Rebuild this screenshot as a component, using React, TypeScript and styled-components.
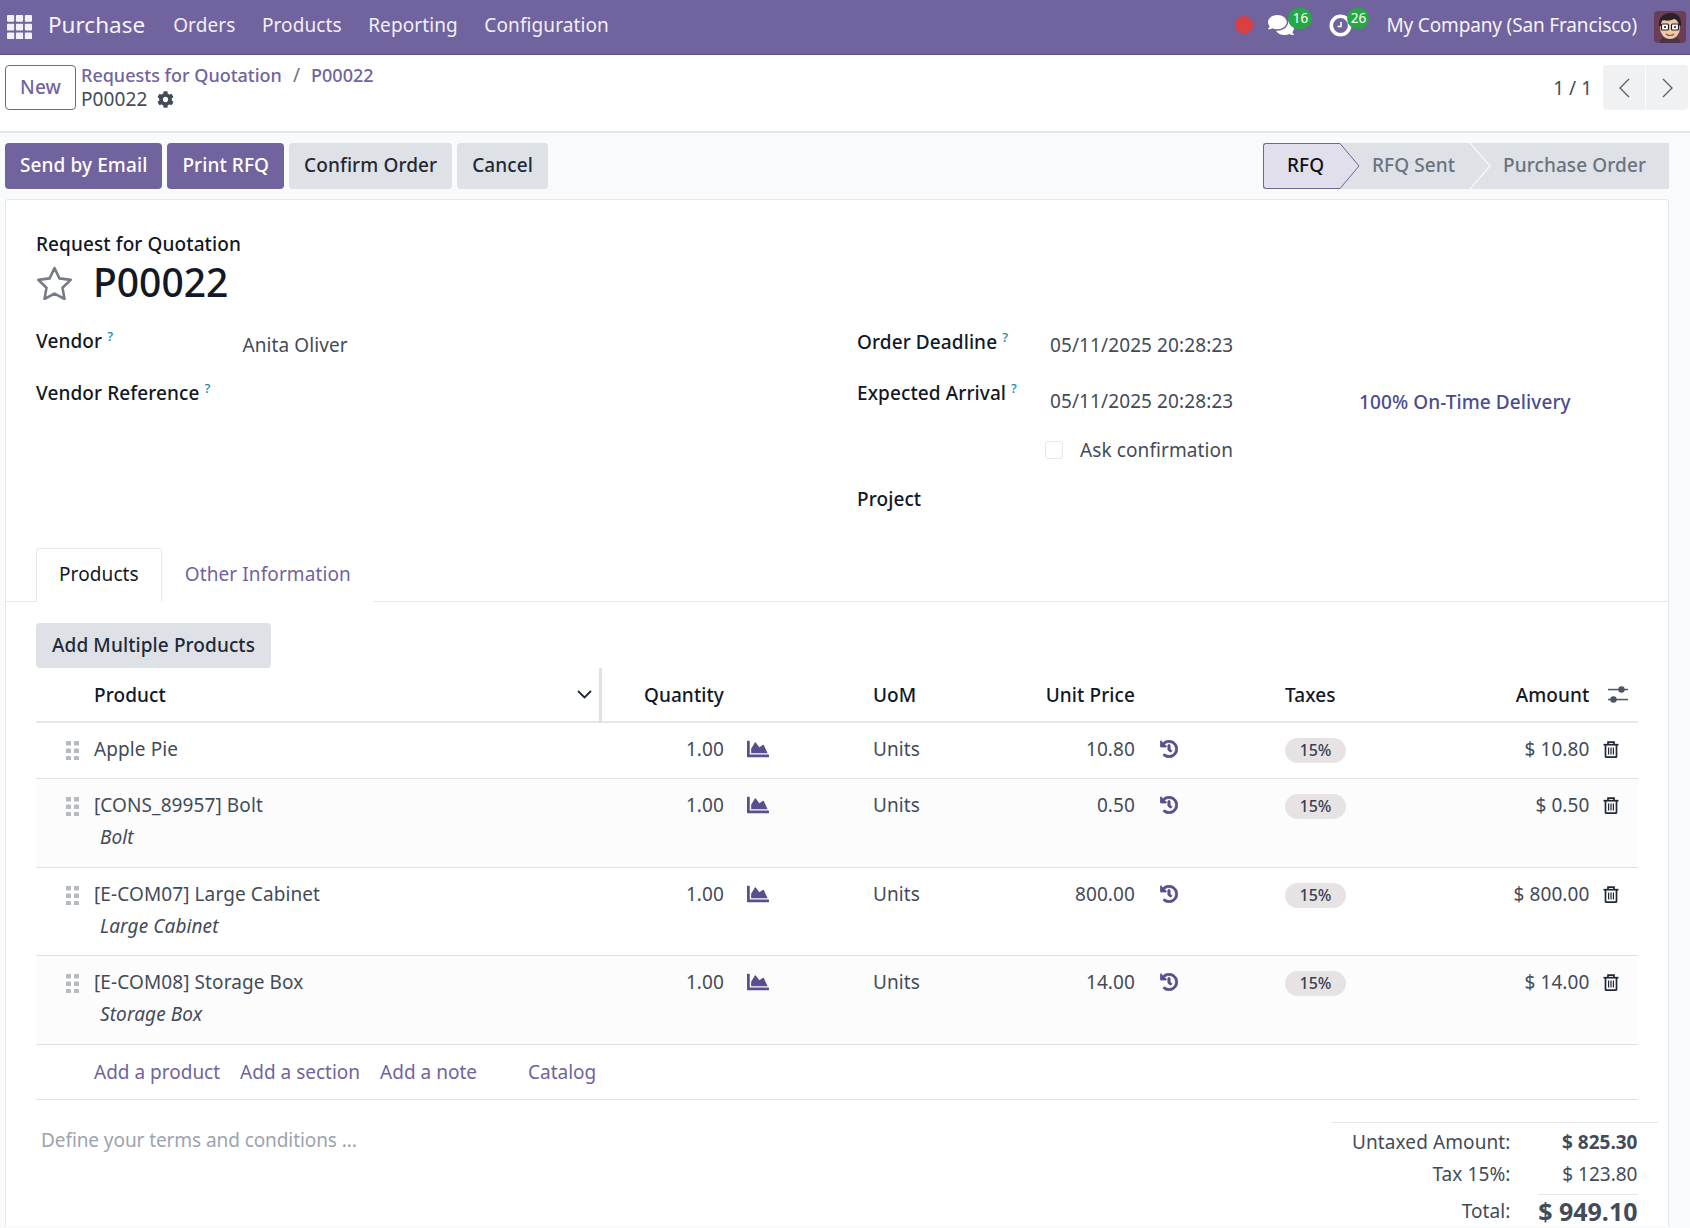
import React from "react";
import styled, { createGlobalStyle } from "styled-components";
import { FaChartArea, FaHistory, FaCog, FaComments } from "react-icons/fa";

const PURPLE = "#71639e";
const GlobalStyle = createGlobalStyle`
  html, body { margin: 0; padding: 0; height: 100%; overflow: hidden; background: #f9fafb; }
  body { font-family: "Noto Sans", "DejaVu Sans", sans-serif; font-size: 19px; line-height: 26px; color: #434b59; letter-spacing: 0.1px; }
  * { box-sizing: border-box; }
`;

const Nav = styled.header`
  height: 55px; background: ${PURPLE}; border-bottom: 1px solid #5d5185; color: #fff;
  display: flex; align-items: center; padding: 0 4px 0 7px;
`;
const Brand = styled.span`font-size: 22.5px; margin: -5px 28px 0 16px; color: #f5f3fa; letter-spacing: 0;`;
const MenuList = styled.nav`display: flex; gap: 26.5px; flex: 1; color: #f1eff7; margin-top: -4px;`;
const Systray = styled.div`display: flex; align-items: center; padding-bottom: 4px;`;
const RecDot = styled.span`width: 18px; height: 18px; border-radius: 50%; background: #d9403f; margin-right: 15px;`;
const TrayIcon = styled.span`position: relative; display: flex; width: 26px; height: 26px; align-items: center; margin-right: ${p => p.$gap}px; color: #fff;`;
const CountBadge = styled.span`
  position: absolute; left: ${p => p.$left}px; top: -4px; width: ${p => p.$width}px; height: 21px; border-radius: 11px;
  background: #28a745; color: #fff; font-size: 13.5px; line-height: 20px; text-align: center; letter-spacing: 0;
`;
const Company = styled.span`margin: 0 17px 0 0; color: #f5f3fa; white-space: nowrap; letter-spacing: -0.15px;`;
const AvatarSlot = styled.span`display: flex; margin-top: 3px;`;

const ControlPanel = styled.section`
  height: 78px; background: #fff; border-bottom: 2px solid #e5e7eb; padding: 10px 2px 0 5px;
  display: flex; align-items: flex-start;
`;
const NewButton = styled.button`
  width: 71px; height: 45px; background: #fff; border: 1px solid ${PURPLE}; border-radius: 4px; padding: 0 0 2px;
  color: ${PURPLE}; font: 500 19px "Noto Sans", sans-serif; letter-spacing: 0.1px;
`;
const Crumbs = styled.div`margin-left: 5px; display: flex; flex-direction: column; flex: 1; line-height: 24px; margin-top: -2px;`;
const CrumbLine = styled.div`display: flex; align-items: center;`;
const CrumbLink = styled.a`color: ${PURPLE}; font-weight: 500; font-size: 18px; letter-spacing: 0;`;
const CrumbSep = styled.span`margin: 0 11px 0 11px; color: #6b7280;`;
const CogSlot = styled.span`display: flex; margin-left: 10px;`;
const Pager = styled.div`display: flex; align-items: center;`;
const PagerText = styled.span`margin-right: 11px; letter-spacing: 0;`;
const PagerButton = styled.button`
  width: 42px; height: 45px; border: 0; background: #f0f1f3; display: flex; align-items: center; justify-content: center;
  border-radius: ${p => (p.$first ? "4px 0 0 4px" : "0 4px 4px 0")}; margin-left: ${p => (p.$first ? 0 : 1)}px; padding: 0;
`;

const ActionBar = styled.div`display: flex; justify-content: space-between; padding: 10px 21px 10px 5px; background: #f9fafb;`;
const Buttons = styled.div`display: flex; gap: 5px;`;
const ActionButton = styled.button`
  height: 46px; padding: 0 15px 2px; border: 0; border-radius: 4px;
  background: ${p => (p.$primary ? PURPLE : "#dee2e6")}; color: ${p => (p.$primary ? "#fff" : "#1f2937")};
  font: 500 19px "Noto Sans", sans-serif; letter-spacing: 0.1px; white-space: nowrap;
`;
const StatusBar = styled.div`display: flex; height: 46px;`;
const StatusStep = styled.div`
  position: relative; height: 46px; width: ${p => p.$width}px; padding: 0 0 2px ${p => p.$pad}px; display: flex; align-items: center;
  background: ${p => (p.$active ? "#e2dfec" : "#dee2e6")}; color: ${p => (p.$active ? "#111" : "#6b7280")}; font-weight: 500;
  border: ${p => (p.$active ? `1px solid ${PURPLE}` : "0")}; border-right: 0; border-radius: ${p => (p.$active ? "3px 0 0 3px" : "0")};
  white-space: nowrap;
`;
const StepTip = styled.svg`position: absolute; left: 100%; top: ${p => (p.$active ? -1 : 0)}px; z-index: ${p => p.$z}; overflow: visible;`;

const Sheet = styled.main`margin: 0 21px 0 5px; background: #fff; border: 1px solid #e5e7eb; border-bottom: 0; border-radius: 4px 4px 0 0; padding-top: 31px;`;
const Head = styled.div`padding: 0 30px;`;
const DocKind = styled.div`color: #111827; font-weight: 500;`;
const TitleRow = styled.div`display: flex; align-items: center; height: 46px; margin-top: 2px;`;
const Title = styled.h1`margin: 0 0 0 20px; font-size: 39px; line-height: 46px; font-weight: 500; color: #111827; letter-spacing: 0;`;
const FieldColumns = styled.div`display: grid; grid-template-columns: 821px 1fr; margin-top: 17px; padding: 0 30px;`;
const FieldColumn = styled.div`display: flex; flex-direction: column;`;
const FieldRow = styled.div`display: flex; height: ${p => p.$height}px; align-items: ${p => p.$center ? "center" : "flex-start"};`;
const Label = styled.label`
  color: #111827; font-weight: 500; white-space: nowrap; width: ${p => p.$width}px; margin-top: ${p => p.$top}px; flex: none;
`;
const Help = styled.sup`color: #1488a8; font-size: 13px; font-weight: 500; margin-left: 5px; vertical-align: 7px; line-height: 0;`;
const Value = styled.span`margin-top: ${p => p.$top}px; width: ${p => p.$width}px; flex: none; white-space: nowrap;`;
const Delivery = styled.span`margin-top: ${p => p.$top}px; color: #4a4b90; font-weight: 500; white-space: nowrap;`;
const CheckBox = styled.span`width: 18px; height: 18px; margin: 0 17px 0 -5px; border: 1px solid #e5e7eb; border-radius: 3px; background: #fff; flex: none;`;

const Tabs = styled.div`display: flex; margin-top: 27px; height: 54px; border-bottom: 1px solid #e5e7eb; padding-left: 30px;`;
const Tab = styled.div`
  height: 54px; display: flex; align-items: center; padding: 0 22px 3px; white-space: nowrap;
  color: ${p => (p.$active ? "#111827" : PURPLE)}; background: #fff;
  border: 1px solid ${p => (p.$active ? "#e5e7eb" : "transparent")}; border-bottom: ${p => (p.$active ? "1px solid #fff" : "0")};
  border-radius: 4px 4px 0 0;
`;
const TabBody = styled.div`padding: 21px 30px 0;`;
const AddMultiple = styled(ActionButton)`height: 45px; display: block; padding: 0 16px 2px;`;

const COLS = "58px 508px 122px 149px 262px 150px 304.5px 48.5px";
const HeadRow = styled.div`
  display: grid; grid-template-columns: ${COLS}; height: 55px; border-bottom: 2px solid #e5e7eb; align-items: center;
  color: #111827; font-weight: 500;
`;
const Row = styled.div`
  display: grid; grid-template-columns: ${COLS}; height: ${p => p.$height}px; padding-top: 13px; align-items: start;
  border-bottom: 1px solid #dee2e6; background: ${p => (p.$striped ? "#fcfcfd" : "#fff")};
`;
const Cell = styled.div`
  display: flex; align-items: center;
  justify-content: ${p => p.$right ? "flex-end" : p.$between ? "space-between" : "flex-start"}; height: 26px; white-space: nowrap;
`;
const NameCell = styled.div`display: flex; flex-direction: column; white-space: nowrap;`;
const HeadCell = styled.div`
  display: flex; align-items: center; height: 53px; justify-content: ${p => p.$right ? "flex-end" : p.$between ? "space-between" : "flex-start"};
  position: relative;
`;
const SortSlot = styled.span`display: flex; margin-right: 10px;`;
const AdjustSlot = styled.span`display: flex; padding-left: 18px;`;
const Divider = styled.span`position: absolute; right: 0; top: 0; bottom: -2px; width: 3px; background: #dee2e6;`;
const HandleCell = styled.div`display: flex; padding: 5px 0 0 30px;`;
const Desc = styled.em`margin: 6px 0 0 6px; font-style: italic;`;
const IconCell = styled.div`display: flex; align-items: center; height: 26px; padding-left: ${p => p.$pad}px; color: ${p => p.$color || "#5b4e8c"};`;
const HistoryIcon = styled(FaHistory)`stroke: currentColor; stroke-width: 22px;`;
const TaxBadge = styled.span`
  display: inline-block; width: 61px; height: 25px; margin-top: 3px; border-radius: 13px; background: #e7e3e4; color: #374151;
  font-size: 16px; font-weight: 500; line-height: 25px; text-align: center; letter-spacing: 0;
`;
const AddRow = styled.div`height: 55.5px; border-bottom: 1px solid #dee2e6; display: flex; align-items: center; padding-left: 58px;`;
const AddLink = styled.a`color: ${PURPLE}; margin-right: ${p => p.$gap}px; white-space: nowrap; letter-spacing: 0;`;
const Footer = styled.div`display: flex; justify-content: space-between; align-items: flex-start; margin-right: -20px;`;
const Terms = styled.div`color: #9ca3af; margin: 27px 0 0 5px; letter-spacing: -0.08px;`;
const Totals = styled.div`width: 326px; margin-top: 22px; border-top: 1px solid #e5e7eb; padding-top: 3px;`;
const TotalLine = styled.div`display: grid; grid-template-columns: 178.5px 127px; height: 32px; align-items: center; text-align: right;`;
const TotalLabel = styled.span`white-space: nowrap;`;
const TotalValue = styled.span`font-weight: ${p => p.$bold ? 700 : 400}; white-space: nowrap; letter-spacing: 0;`;
const GrandLine = styled(TotalLine)`margin-top: 4px;`;
const GrandValue = styled.span`border-top: 1px solid #e5e7eb; margin-left: 27px; font-size: 25px; line-height: 32px; font-weight: 700; white-space: nowrap; letter-spacing: 0;`;

const AppsIcon = () => (
  <svg width="25" height="24" viewBox="0 0 25 24" fill="#f3f1f8">
    {[0, 8.7, 17.4].map(y => [0, 8.9, 17.8].map(x => <rect key={`${x}${y}`} x={x} y={y} width="7.2" height="6.8" rx="1" />))}
  </svg>
);
const Chevron = ({ dir }: { dir: "l" | "r" }) => (
  <svg width="13" height="20" viewBox="0 0 13 20" fill="none" stroke="#5b6370" strokeWidth="1.4">
    <path d={dir === "l" ? "M11 1 2 10l9 9" : "M2 1l9 9-9 9"} />
  </svg>
);
const Star = () => (
  <svg width="37" height="35" viewBox="0 0 37 35" fill="none" stroke="#777c84" strokeWidth="2.6" strokeLinejoin="round">
    <path d="M18.5 3l4.9 10.4 11.3 1.5-8.2 7.9 2 11.2-10-5.4-10 5.4 2-11.2-8.2-7.9 11.3-1.5z" />
  </svg>
);
const Clock = () => (
  <svg width="24" height="24" viewBox="0 0 24 24" fill="none" stroke="#fff" strokeWidth="3.6">
    <circle cx="11.5" cy="12.5" r="9.2" />
    <path d="M12 9v4.5H8.5" strokeWidth="1.6" />
  </svg>
);
const Handle = () => (
  <svg width="13" height="19" viewBox="0 0 13 19" fill="#b5b9c0">
    {[0, 7.5, 15].map(y => [0, 8].map(x => <rect key={`${x}${y}`} x={x} y={y} width="5" height="4.5" rx="0.6" />))}
  </svg>
);
const Adjust = () => (
  <svg width="20" height="17" viewBox="0 0 20 17" fill="#4b5563">
    <rect x="0" y="2.8" width="20" height="1.5" /><circle cx="13.5" cy="3.5" r="3.2" />
    <rect x="0" y="12.8" width="20" height="1.5" /><circle cx="5.5" cy="13.5" r="3.2" />
  </svg>
);
const Trash = () => (
  <svg width="16" height="17" viewBox="0 0 16 17" fill="none" stroke="#1f2937" strokeWidth="1.7">
    <path d="M0.5 3.7h15" /><path d="M5 3.5V1.2h6v2.3" />
    <path d="M2.5 3.7v11.5c0 .7.5 1 1 1h9c.5 0 1-.3 1-1V3.7" />
    <path d="M5.6 6.5v7M8 6.5v7M10.4 6.5v7" strokeWidth="1.2" />
  </svg>
);
const ThinDown = () => (
  <svg width="15" height="9" viewBox="0 0 15 9" fill="none" stroke="#1f2937" strokeWidth="1.8"><path d="M1 1l6.5 6.5L14 1" /></svg>
);
const Avatar = () => (
  <svg width="32" height="32" viewBox="0 0 32 32">
    <rect width="32" height="32" rx="4" fill="#6b3d57" />
    <path d="M6 32c0-5 4-7 10-7s10 2 10 7z" fill="#4a3344" />
    <ellipse cx="16" cy="17" rx="10" ry="11" fill="#efc9a6" />
    <path d="M5 15C4 6 10 2 17 2c7 0 11 5 10 13l-2-1c-1-4-3-6-5-6-3 2-9 2-12 1-1 1-1 3-1 6z" fill="#2a2226" />
    <rect x="7.5" y="13" width="7" height="6" rx="1" fill="#fff" stroke="#222" strokeWidth="1.2" />
    <rect x="17.5" y="13" width="7" height="6" rx="1" fill="#fff" stroke="#222" strokeWidth="1.2" />
    <circle cx="11" cy="16" r="1.1" fill="#222" /><circle cx="21" cy="16" r="1.1" fill="#222" />
    <path d="M12 23c2 2 6 2 8 0" fill="none" stroke="#8a4a3a" strokeWidth="1.2" />
  </svg>
);

const rows = [
  { name: "Apple Pie", price: "10.80", amount: "$ 10.80", h: 56 },
  { name: "[CONS_89957] Bolt", desc: "Bolt", price: "0.50", amount: "$ 0.50", h: 89, striped: true },
  { name: "[E-COM07] Large Cabinet", desc: "Large Cabinet", price: "800.00", amount: "$ 800.00", h: 88 },
  { name: "[E-COM08] Storage Box", desc: "Storage Box", price: "14.00", amount: "$ 14.00", h: 88.5, striped: true },
];

export default function App() {
  return (
    <>
      <GlobalStyle />
      <Nav>
        <AppsIcon />
        <Brand>Purchase</Brand>
        <MenuList>
          <span>Orders</span><span>Products</span><span>Reporting</span><span>Configuration</span>
        </MenuList>
        <Systray>
          <RecDot />
          <TrayIcon $gap={35}><FaComments size={26} /><CountBadge $left={20} $width={24}>16</CountBadge></TrayIcon>
          <TrayIcon $gap={31}><Clock /><CountBadge $left={18} $width={22}>26</CountBadge></TrayIcon>
          <Company>My Company (San Francisco)</Company>
          <AvatarSlot><Avatar /></AvatarSlot>
        </Systray>
      </Nav>
      <ControlPanel>
        <NewButton>New</NewButton>
        <Crumbs>
          <CrumbLine><CrumbLink>Requests for Quotation</CrumbLink><CrumbSep>/</CrumbSep><CrumbLink>P00022</CrumbLink></CrumbLine>
          <CrumbLine>P00022<CogSlot><FaCog size={17} /></CogSlot></CrumbLine>
        </Crumbs>
        <Pager>
          <PagerText>1 / 1</PagerText>
          <PagerButton $first><Chevron dir="l" /></PagerButton>
          <PagerButton><Chevron dir="r" /></PagerButton>
        </Pager>
      </ControlPanel>
      <ActionBar>
        <Buttons>
          <ActionButton $primary>Send by Email</ActionButton>
          <ActionButton $primary>Print RFQ</ActionButton>
          <ActionButton>Confirm Order</ActionButton>
          <ActionButton>Cancel</ActionButton>
        </Buttons>
        <StatusBar>
          <StatusStep $active $width={77} $pad={23}>RFQ
            <StepTip $active $z={3} width="19" height="46"><path d="M0 0.5 19 23 0 45.5" fill="#e2dfec" stroke={PURPLE} /></StepTip>
          </StatusStep>
          <StatusStep $width={130} $pad={32}>RFQ Sent
            <StepTip $z={2} width="20" height="46"><path d="M0 0 20 23 0 46" fill="#dee2e6" stroke="#f6f7f8" strokeWidth="1.5" /></StepTip>
          </StatusStep>
          <StatusStep $width={199} $pad={33}>Purchase Order</StatusStep>
        </StatusBar>
      </ActionBar>
      <Sheet>
        <Head>
          <DocKind>Request for Quotation</DocKind>
          <TitleRow><Star /><Title>P00022</Title></TitleRow>
        </Head>
        <FieldColumns>
          <FieldColumn>
            <FieldRow $height={52}>
              <Label $width={206.5} $top={6}>Vendor<Help>?</Help></Label>
              <Value $top={10}>Anita Oliver</Value>
            </FieldRow>
            <FieldRow $height={52}><Label $top={6}>Vendor Reference<Help>?</Help></Label></FieldRow>
          </FieldColumn>
          <FieldColumn>
            <FieldRow $height={56}>
              <Label $width={193} $top={7}>Order Deadline<Help>?</Help></Label>
              <Value $top={10}>05/11/2025 20:28:23</Value>
            </FieldRow>
            <FieldRow $height={49}>
              <Label $width={193} $top={2}>Expected Arrival<Help>?</Help></Label>
              <Value $top={10} $width={309}>05/11/2025 20:28:23</Value>
              <Delivery $top={11}>100% On-Time Delivery</Delivery>
            </FieldRow>
            <FieldRow $height={46} $center>
              <Label $width={193} $top={0} />
              <CheckBox />
              <Value $top={0}>Ask confirmation</Value>
            </FieldRow>
            <FieldRow $height={48} $center><Label $top={4}>Project</Label></FieldRow>
          </FieldColumn>
        </FieldColumns>
        <Tabs>
          <Tab $active>Products</Tab>
          <Tab>Other Information</Tab>
        </Tabs>
        <TabBody>
          <AddMultiple>Add Multiple Products</AddMultiple>
          <HeadRow>
            <HeadCell />
            <HeadCell $between>Product<SortSlot><ThinDown /></SortSlot><Divider /></HeadCell>
            <HeadCell $right>Quantity</HeadCell>
            <HeadCell />
            <HeadCell $between>UoM<span>Unit Price</span></HeadCell>
            <HeadCell />
            <HeadCell $between>Taxes<span>Amount</span></HeadCell>
            <HeadCell><AdjustSlot><Adjust /></AdjustSlot></HeadCell>
          </HeadRow>
          {rows.map(r => (
            <Row key={r.name} $height={r.h} $striped={r.striped}>
              <HandleCell><Handle /></HandleCell>
              <NameCell>
                <span>{r.name}</span>
                {r.desc && <Desc>{r.desc}</Desc>}
              </NameCell>
              <Cell $right>1.00</Cell>
              <IconCell $pad={23}><FaChartArea size={22} /></IconCell>
              <Cell $between>Units<span>{r.price}</span></Cell>
              <IconCell $pad={25}><HistoryIcon size={18} /></IconCell>
              <Cell $between><TaxBadge>15%</TaxBadge><span>{r.amount}</span></Cell>
              <IconCell $pad={13} $color="#1f2937"><Trash /></IconCell>
            </Row>
          ))}
          <AddRow>
            <AddLink $gap={20}>Add a product</AddLink>
            <AddLink $gap={20}>Add a section</AddLink>
            <AddLink $gap={51}>Add a note</AddLink>
            <AddLink>Catalog</AddLink>
          </AddRow>
          <Footer>
            <Terms>Define your terms and conditions ...</Terms>
            <Totals>
              <TotalLine><TotalLabel>Untaxed Amount:</TotalLabel><TotalValue $bold>$ 825.30</TotalValue></TotalLine>
              <TotalLine><TotalLabel>Tax 15%:</TotalLabel><TotalValue>$ 123.80</TotalValue></TotalLine>
              <GrandLine><TotalLabel>Total:</TotalLabel><GrandValue>$ 949.10</GrandValue></GrandLine>
            </Totals>
          </Footer>
        </TabBody>
      </Sheet>
    </>
  );
}
